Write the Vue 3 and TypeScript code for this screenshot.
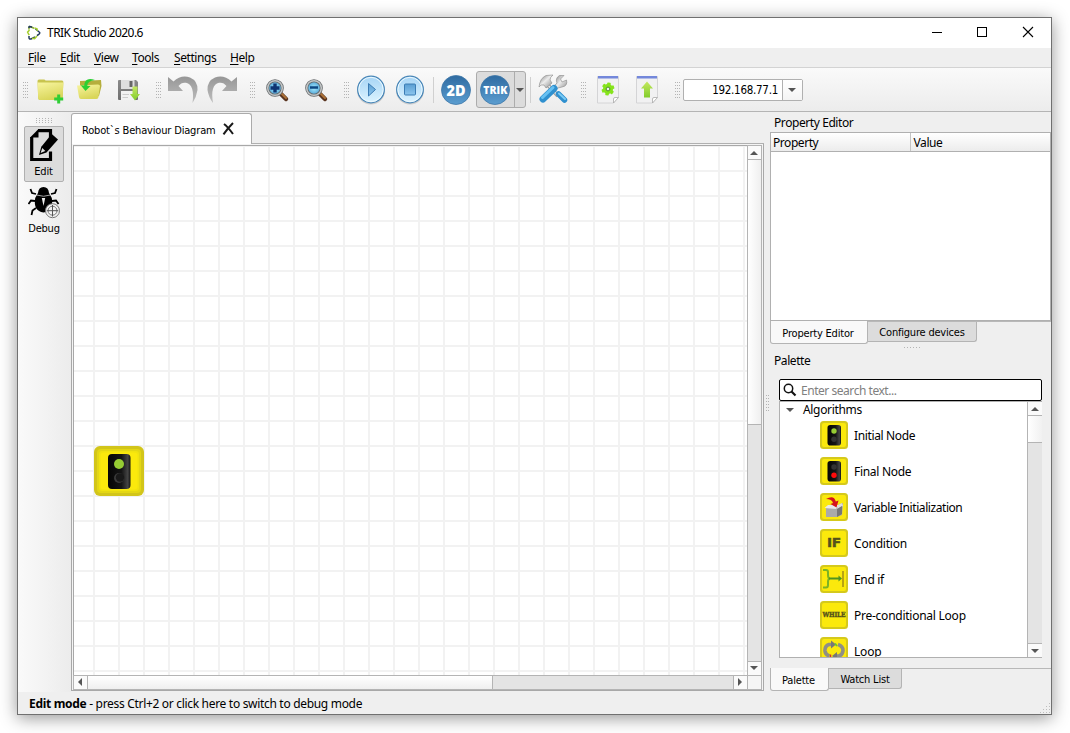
<script setup lang="ts">
const menus: string[] = ['File', 'Edit', 'View', 'Tools', 'Settings', 'Help']

interface PaletteItem {
  name: string
  icon: 'initial' | 'final' | 'variable' | 'if' | 'endif' | 'while' | 'loop'
}

const items: PaletteItem[] = [
  { name: 'Initial Node', icon: 'initial' },
  { name: 'Final Node', icon: 'final' },
  { name: 'Variable Initialization', icon: 'variable' },
  { name: 'Condition', icon: 'if' },
  { name: 'End if', icon: 'endif' },
  { name: 'Pre-conditional Loop', icon: 'while' },
  { name: 'Loop', icon: 'loop' },
]
</script>

<template>
  <div class="desktop">
    <svg class="defs" width="0" height="0">
      <defs>
        <linearGradient id="folder" x1="0" y1="0" x2=".4" y2="1"><stop offset="0" stop-color="#f8f5a0" /><stop offset="1" stop-color="#d9d65a" /></linearGradient>
        <linearGradient id="gray" x1="0" y1="0" x2="0" y2="1"><stop offset="0" stop-color="#979797" /><stop offset="1" stop-color="#bdbdbd" /></linearGradient>
        <linearGradient id="sky" x1="0" y1="0" x2="0" y2="1"><stop offset="0" stop-color="#a6d4f5" /><stop offset="1" stop-color="#dcf4ff" /></linearGradient>
        <linearGradient id="navy" x1="0" y1="0" x2="0" y2="1"><stop offset="0" stop-color="#2f6ba1" /><stop offset="1" stop-color="#5b9dd0" /></linearGradient>
        <linearGradient id="glyph" x1="0" y1="0" x2="0" y2="1"><stop offset="0" stop-color="#5a9ed2" /><stop offset="1" stop-color="#8cc6ee" /></linearGradient>
        <linearGradient id="lime" x1="0" y1="0" x2="0" y2="1"><stop offset="0" stop-color="#c4e860" /><stop offset="1" stop-color="#82cc2b" /></linearGradient>
        <linearGradient id="metal" x1="0" y1="0" x2="1" y2="1"><stop offset="0" stop-color="#777" /><stop offset=".45" stop-color="#ececec" /><stop offset="1" stop-color="#858585" /></linearGradient>
        <linearGradient id="steel" x1="0" y1="0" x2="0" y2="1"><stop offset="0" stop-color="#8a8a8a" /><stop offset="1" stop-color="#6f6f6f" /></linearGradient>
        <linearGradient id="lamp" x1="0" y1="0" x2="1" y2="0"><stop offset="0" stop-color="#050505" /><stop offset=".6" stop-color="#151515" /><stop offset=".88" stop-color="#444" /><stop offset="1" stop-color="#111" /></linearGradient>
        <radialGradient id="lens"><stop offset="0" stop-color="#a8ecff" /><stop offset="1" stop-color="#4a9ed2" /></radialGradient>
      </defs>
    </svg>

    <main class="window">
      <header class="titlebar">
        <svg class="logo" width="16" height="16" viewBox="0 0 16 16" fill="none" stroke-width="1.5">
          <path d="M3 4.5V2.5Q3 1 4.6 1.8L8 3.2" stroke="#7fa82c" />
          <path d="M3 3V2.4Q3 1 4.6 1.7L6 2.3M9.5 4L13.2 7Q14.5 8 13 9.2L11 10.7M9 12L5 14Q3 14.5 3 12.6V11" stroke="#22395c" />
          <path d="M3.5 5L1.6 7.2L3.2 10.2M8.5 3L11 3.8L11.2 6M6 13.3L8.6 13.6L11 11" stroke="#a5cf2e" />
        </svg>
        <span class="title">TRIK Studio 2020.6</span>
        <svg class="winbtns" width="138" height="30" viewBox="0 0 138 30" fill="none" stroke="#000" shape-rendering="crispEdges">
          <path d="M19 14.5H29" /><rect x="64.500" y="9.500" width="9" height="9" />
          <path d="M110 9L120 19M120 9L110 19" shape-rendering="auto" stroke-width="1.1" />
        </svg>
      </header>

      <nav class="menubar">
        <span v-for="m in menus" :key="m" :class="['menu', m.toLowerCase()]"><u>{{ m[0] }}</u>{{ m.slice(1) }}</span>
      </nav>

      <section class="toolbar">
        <i class="grip first" />
        <svg class="tool" viewBox="0 0 39 43">
          <path d="M6.500 13Q6.500 11.500 8 11.500H13Q14 11.500 14.500 12.500H31Q32.500 12.500 32.300 14L31.600 30Q31.500 32 30 32H9Q7.300 32 7.200 30Z" fill="#c8c44e" />
          <path d="M6.500 14.500H32.500L31.500 30.500Q31.500 32 30 32H9Q7.300 32 7.200 30Z" fill="url(#folder)" />
          <path d="M27.700 26.500V35.500M23.200 31H32.200" stroke="#2fce35" stroke-width="3" />
        </svg>
        <svg class="tool" viewBox="0 0 39 43">
          <path d="M10 13L31 12L31.500 18L29 28L10 30Z" fill="#b5ae3c" />
          <path d="M7 17.500L28 16.500Q30 16.500 30 18L28.500 29Q28.300 31 26.500 31L11 31Q9.300 31 9 29Z" fill="url(#folder)" />
          <path d="M25 12Q15 8.500 14.200 17.500L10.700 17.300L15.500 23L20.500 18L17.300 17.800Q17 13 25 12Z" fill="#2bcf32" />
        </svg>
        <svg class="tool" viewBox="0 0 39 43">
          <path d="M9 13Q9 12 10 12H27L29 14V31Q29 32 28 32H10Q9 32 9 31Z" fill="url(#steel)" />
          <rect x="12" y="12" width="13.500" height="9" fill="#dedede" /><rect x="20.500" y="13" width="3" height="6" fill="#666" />
          <rect x="12" y="23" width="14" height="9" fill="#f2f2f2" /><path d="M13.500 26.500H20M13.500 29.500H19" stroke="#ccc" />
          <path d="M23.500 18.500H28.500V26H31L26 32.500L21 26H23.500Z" fill="url(#lime)" />
        </svg>

        <i class="grip" />
        <svg class="tool" viewBox="0 0 39 43"><path d="M4 9L9.500 13.500Q17 6.500 26 9.500Q34 13 33.500 22Q32.500 29 28.500 35Q31 17 22 14.800Q17.500 14 14.500 18L19 23H4Z" fill="url(#gray)" /></svg>
        <svg class="tool" viewBox="0 0 39 43"><path d="M34 9L28.500 13.500Q21 6.500 12 9.500Q4 13 4.500 22Q5.500 29 10 35Q7 17 16 14.800Q20.500 14 23.500 18L19 23H34Z" fill="url(#gray)" /></svg>

        <i class="grip" />
        <svg v-for="z in ['in', 'out']" :key="z" class="tool" viewBox="0 0 39 43">
          <path d="M22 25L28 31" stroke="#5a3520" stroke-width="4.500" stroke-linecap="round" />
          <path d="M24 26L28 30" stroke="#ad7238" stroke-width="2" stroke-linecap="round" />
          <circle cx="17" cy="20" r="7.300" fill="url(#lens)" stroke="#66696b" stroke-width="3" />
          <circle cx="17" cy="20" r="7.300" fill="none" stroke="#c2c6c7" stroke-width="1.500" />
          <path v-if="z === 'in'" d="M17 15.500V24.500M12.500 20H21.500" stroke="#0d3573" stroke-width="3.400" />
          <path v-else d="M13 19.500H21" stroke="#0d4783" stroke-width="2.500" />
        </svg>

        <i class="grip" />
        <svg class="tool" viewBox="0 0 39 43">
          <circle cx="19" cy="22.500" r="14" fill="#ccc" /><circle cx="19" cy="21.500" r="13.300" fill="url(#sky)" stroke="#4a87b8" stroke-width="1.300" />
          <circle cx="19" cy="21.500" r="12.200" fill="none" stroke="#eefaff" /><path d="M16.500 15.500L23.500 21.500L16.500 28Z" fill="url(#glyph)" stroke="#3b7cb4" />
        </svg>
        <svg class="tool" viewBox="0 0 39 43">
          <circle cx="19" cy="22.500" r="14" fill="#ccc" /><circle cx="19" cy="21.500" r="13.300" fill="url(#sky)" stroke="#4a87b8" stroke-width="1.300" />
          <circle cx="19" cy="21.500" r="12.200" fill="none" stroke="#eefaff" /><rect x="13.500" y="16" width="11" height="11" rx="1" fill="url(#glyph)" stroke="#3b7cb4" />
        </svg>

        <i class="sep" />
        <svg class="tool" viewBox="0 0 39 43">
          <circle cx="19" cy="22" r="14.500" fill="url(#navy)" stroke="#3d77a8" stroke-width=".8" />
          <text x="19" y="27.500" class="badge two" textLength="19" lengthAdjust="spacingAndGlyphs">2D</text>
        </svg>
        <span class="split">
          <svg width="37" height="36" viewBox="0 0 37 36">
            <circle cx="18" cy="18" r="14.500" fill="url(#navy)" stroke="#3d77a8" stroke-width=".8" />
            <text x="18.300" y="22" class="badge trik" textLength="24" lengthAdjust="spacingAndGlyphs">TRIK</text>
          </svg>
          <b><i class="down" /></b>
        </span>
        <i class="sep after" />
        <svg class="tool" viewBox="0 0 39 43">
          <path d="M12 15L24 28" stroke="#999" stroke-width="4" /><path d="M12 15L24 28" stroke="#e8e8e8" stroke-width="1.800" />
          <path d="M5 19Q6 10 12 7.500L19 7Q16 9 16 12L18 15L12 20L10 17L7 17Z" fill="url(#metal)" stroke="#888" stroke-width=".6" />
          <path d="M20 18L23 15Q21 10 25.500 7.500L30 7.500L26.500 11L28 14L32.500 12Q34 18 28 19L24 20L20 23Z" fill="url(#metal)" stroke="#888" stroke-width=".6" />
          <path d="M9 31L20 20.500" stroke="#2f90cf" stroke-width="7" stroke-linecap="round" /><path d="M8.500 29.500L19 19.500" stroke="#66c0f2" stroke-width="3" stroke-linecap="round" />
          <path d="M24.500 26L30.500 32" stroke="#2f90cf" stroke-width="5.500" stroke-linecap="round" /><path d="M25 25.500L31 31" stroke="#7acbf5" stroke-width="2" stroke-linecap="round" />
        </svg>

        <i class="grip" />
        <svg v-for="d in ['gear', 'upload']" :key="d" class="tool" viewBox="0 0 39 43">
          <path d="M8.500 8.500H29.500V29L24.500 35H8.500Z" fill="#f1f1f2" stroke="#d4d4d6" />
          <rect x="9" y="8" width="20" height="2.500" fill="#7488db" />
          <path d="M29.500 29.500L24.500 35V31Q24.500 29.500 26 29.500Z" fill="#fff" stroke="#aaa" stroke-width=".8" />
          <g v-if="d === 'gear'" fill="#86e31c">
            <rect v-for="a in [0, 60, 120]" :key="a" x="17.200" y="14.600" width="3.600" height="12.800" rx=".8" :transform="`rotate(${a + 10} 19 21)`" />
            <circle cx="19" cy="21" r="5" /><circle cx="19" cy="21" r="1.900" fill="#eee" stroke="#4f8f28" stroke-width="1" />
          </g>
          <path v-else d="M19 13.500L25 20.500H22V29.500H16V20.500H13Z" fill="url(#lime)" />
        </svg>

        <i class="grip" />
        <span class="combo"><span>192.168.77.1</span><b><i class="down" /></b></span>
      </section>

      <section class="body">
        <aside class="modes">
          <i class="grip wide" />
          <button class="mode active">
            <svg width="32" height="34" viewBox="0 0 32 34">
              <path d="M10 1.700H22.500V9.500M22.500 22.500V30.500H3.700V8" fill="none" stroke="#000" stroke-width="3.200" />
              <path d="M2.100 8.500L10.500 .1V8.500Z" /><path d="M23.700 5L30 10.500L18.500 23.500L11 26L13.300 17.700Z" />
              <path d="M14.300 19L17.300 22L12.600 24Z" fill="#ddd" />
            </svg>
            <span>Edit</span>
          </button>
          <button class="mode second">
            <svg width="32" height="34" viewBox="0 -1 32 34">
              <path d="M8 7L4 6L2.500 2M7 14L3 13.500L.5 17M8 21L4.500 23.500L3.500 28M23 7L27 6L28.500 2M24 14L28 13.500L30.500 17" fill="none" stroke="#000" stroke-width="1.800" />
              <path d="M10 6Q10.500 0 15.500 0Q20.500 0 21 6L23.800 11Q26 24 15.500 25.500Q5 24 7.200 11Z" />
              <path d="M8.500 8Q15.500 10.500 22.500 8" stroke="#ccc" stroke-width=".8" fill="none" /><path d="M13.800 11H17.200L15.500 19Z" fill="#eee" />
              <circle cx="24.500" cy="23.700" r="7" fill="#f4f4f4" stroke="#777" /><circle cx="24.500" cy="23.700" r="4.500" fill="none" stroke="#777" />
              <path d="M24.500 18V29.500M18.700 23.700H30.300" stroke="#555" />
            </svg>
            <span class="dbg">Debug</span>
          </button>
        </aside>

        <section class="editor">
          <div class="tabs">
            <div class="doctab">
              <span>Robot`s Behaviour Diagram</span>
              <svg width="14" height="14" viewBox="0 0 14 14"><path d="M2 2Q5.500 4.500 11 12M11 1Q6 6 1.500 12.300" stroke="#1a1a1a" stroke-width="2" fill="none" /></svg>
            </div>
            <div class="tabline" />
          </div>
          <div class="pane">
            <div class="canvas">
              <svg class="node" width="50" height="50" viewBox="0 0 50 50">
                <rect width="50" height="50" rx="6" fill="#d2c51a" /><rect x="3" y="3" width="44" height="44" rx="4" fill="#e4d714" /><rect x="5" y="5" width="40" height="40" rx="3" fill="#f1e30f" /><rect x="6.500" y="6.500" width="37" height="37" rx="3" fill="#fbe90c" />
                <rect x="14" y="8" width="22.500" height="35" rx="4" fill="url(#lamp)" />
                <circle cx="25" cy="18" r="5" fill="#96cc33" /><circle cx="25" cy="32" r="5" fill="#3a3a3a" /><circle cx="26" cy="31.500" r="4.200" fill="#191919" />
              </svg>
            </div>
            <div class="vbar"><b><i class="up" /></b><em /><s /><b><i class="down" /></b></div>
            <div class="hbar"><b><i class="left" /></b><em /><s /><b><i class="right" /></b></div>
            <div class="corner" />
          </div>
        </section>

        <div class="gutter"><i class="grip" /></div>

        <aside class="docks">
          <div class="dock-title">Property Editor</div>
          <div class="table">
            <div class="thead"><span>Property</span><span class="val">Value</span></div>
          </div>
          <div class="btabs">
            <span class="sel pe">Property Editor</span><span class="other cd">Configure devices</span>
          </div>
          <i class="grip hgrip" />
          <div class="dock-title pal">Palette</div>
          <div class="palette">
            <div class="search">
              <svg width="14" height="14" viewBox="0 0 14 14" fill="none" stroke="#111"><circle cx="5.500" cy="5.500" r="4.200" stroke-width="1.500" /><path d="M8.500 8.500L12.500 12.500" stroke-width="2.200" /></svg>
              <span>Enter search text...</span>
            </div>
            <div class="treebox">
              <div class="tree">
                <div class="group"><i class="down" /><span>Algorithms</span></div>
                <div v-for="it in items" :key="it.name" class="row">
                  <svg width="28" height="28" viewBox="0 0 28 28">
                    <rect width="28" height="28" rx="3.500" fill="#d5c91c" /><rect x="2" y="2" width="24" height="24" rx="2" fill="#fbe90c" />
                    <g v-if="it.icon === 'initial' || it.icon === 'final'">
                      <rect x="7.500" y="4" width="13.500" height="20.500" rx="2.800" fill="url(#lamp)" />
                      <circle cx="14" cy="10" r="2.700" :fill="it.icon === 'initial' ? '#96cc33' : '#333'" />
                      <circle cx="14" cy="18.300" r="2.700" :fill="it.icon === 'final' ? '#ff0b0b' : '#333'" />
                    </g>
                    <g v-else-if="it.icon === 'variable'">
                      <path d="M6 14L18 12L23 10V12L22 22L17 24H6Z" fill="#aaa" /><path d="M4.500 15L8 12H19L16 16Z" fill="#e9e9e9" /><path d="M18 12L22 10L23 13L17 16Z" fill="#ddd" /><path d="M17 16L22 13V21L17 24Z" fill="#777" />
                      <path d="M6 6Q14 1.500 15.800 8.500L18.500 7.500L16.500 14.500L10.500 11L13 10Q12 6 6 6Z" fill="#d5131c" />
                    </g>
                    <text v-else-if="it.icon === 'if'" x="14" y="18.300" class="word" font-size="12" textLength="14" lengthAdjust="spacingAndGlyphs">IF</text>
                    <g v-else-if="it.icon === 'endif'" fill="none" stroke="#7cb324" stroke-width="2">
                      <path d="M3 5H6Q8 5 8 7V10Q8 13.500 10 13.500Q8 13.500 8 17V20Q8 22.500 6 22.500H3" /><path d="M9 13.500H20" stroke="#4f9420" /><path d="M18.500 10.500L22 13.500L18.500 16.500Z" fill="#4f9420" stroke="none" /><path d="M23 6V22" stroke="#a28d16" stroke-width="1.500" />
                    </g>
                    <text v-else-if="it.icon === 'while'" x="14" y="16" class="word while" font-size="7" textLength="23" lengthAdjust="spacingAndGlyphs">WHILE</text>
                    <g v-else fill="none" stroke="#8f8f86" stroke-width="3.600">
                      <path d="M12 7.500H9Q4.500 9 5 14Q5.500 18 9.500 19" /><path d="M18 7.500Q23 9 23 13.500Q22.500 18 19 19H15" /><path d="M11 3.500L16 7.500L11 11.500ZM17 15L12 19L17 23Z" fill="#777" stroke="none" /><path d="M15 6.500L17 9" stroke="#6cc42c" stroke-width="2" /><path d="M10.500 17.500V21" stroke="#c33" stroke-width="1.500" />
                    </g>
                  </svg>
                  <span :class="'t-' + it.icon">{{ it.name }}</span>
                </div>
              </div>
              <div class="tbar"><b><i class="up" /></b><em /><s /><b><i class="down" /></b></div>
            </div>
          </div>
          <div class="btabs bottom">
            <span class="sel pl">Palette</span><span class="other wl">Watch List</span>
          </div>
        </aside>
      </section>

      <footer class="status">
        <span><strong>Edit mode</strong> - press Ctrl+2 or click here to switch to debug mode</span>
        <svg width="12" height="12" viewBox="0 0 12 12" fill="#bdbdbd"><path d="M10 1h1v1h-1zM7 4h1v1h-1zM10 4h1v1h-1zM4 7h1v1h-1zM7 7h1v1h-1zM10 7h1v1h-1zM1 10h1v1h-1zM4 10h1v1h-1zM7 10h1v1h-1zM10 10h1v1h-1z" /></svg>
      </footer>
    </main>
  </div>
</template>

<style>
html, body { margin: 0; background: #fff; overflow: hidden; }
</style>

<style scoped>
* { box-sizing: border-box; }
.desktop { width: 1070px; height: 733px; padding: 17px; overflow: hidden; font: 12px/16px "Noto Sans", "Open Sans", sans-serif; color: #000; background: #fff; white-space: nowrap; }
.defs { position: absolute; }
.window { width: 1035px; height: 698px; border: 1px solid #707070; background: #efefef; display: flex; flex-direction: column; box-shadow: 0 3px 16px rgba(0, 0, 0, .42); }
.titlebar { height: 30px; flex: none; background: #fff; display: flex; align-items: center; }
.logo { margin-left: 8px; }
.title { margin-left: 5px; letter-spacing: -.53px; }
.winbtns { margin-left: auto; }
.menubar { height: 20px; flex: none; border-bottom: 1px solid #d3d3d3; padding: 2px 0 0 10px; display: flex; letter-spacing: -.42px; }
.menu { flex: none; }
.menu u { text-underline-offset: 2px; }
.file { width: 32px; } .edit { width: 34px; } .view { width: 38px; } .tools { width: 42px; } .settings { width: 56px; }
.toolbar { height: 44px; flex: none; border-bottom: 1px solid #b4b4b4; background: linear-gradient(#fafafa, #ececec); display: flex; align-items: center; }
.tool { width: 39px; height: 43px; flex: none; }
.grip { display: block; flex: none; width: 5px; height: 16px; margin: 0 3px 0 8px; background: radial-gradient(circle at .5px .5px, #b4b4b4 .6px, transparent .8px) 0 0 / 2px 3px; }
.grip.first { margin: 0 3px 0 5px; }
.sep { width: 1px; height: 26px; background: #d0d0d0; margin: 0 3px; }
.sep.after { margin: 0 3px 0 4px; }
.split { display: flex; flex: none; width: 50px; height: 37px; border: 1px solid #acacac; border-radius: 3px; background: #dcdcdc; }
.split b { flex: 1; border-left: 1px solid #acacac; display: grid; place-items: center; }
.badge { fill: #fff; text-anchor: middle; font-family: "Open Sans", "Noto Sans", sans-serif; font-weight: 800; }
.badge.two { font-size: 15px; }
.badge.trik { font-size: 10.5px; }
.down, .up, .left, .right { width: 0; height: 0; flex: none; border: 4px solid transparent; }
.down { border-top-color: #555; border-bottom: 0; }
.up { border-bottom-color: #555; border-top: 0; }
.left { border-right-color: #555; border-left: 0; }
.right { border-left-color: #555; border-right: 0; }
.combo { width: 120px; height: 22px; border: 1px solid #b0b0b0; border-radius: 2px; background: #fff; display: flex; font: 11.5px/21px "DejaVu Sans Condensed", "DejaVu Sans", sans-serif; letter-spacing: -.27px; }
.combo > span { width: 98px; text-align: right; padding-right: 4px; }
.combo b { flex: 1; border-left: 1px solid #b0b0b0; display: grid; place-items: center; padding-right: 2px; background: linear-gradient(#fff, #f4f4f4); }
.body { height: 580px; flex: none; display: flex; }
.modes { width: 53px; flex: none; background: linear-gradient(90deg, #fafafa, #ececec); display: flex; flex-direction: column; align-items: center; }
.grip.wide { width: 17px; height: 5px; margin: 6px 0 3px -1px; background-size: 3px 2px; }
.mode { width: 40px; height: 56px; margin-right: 1px; padding: 2px 0 0; border: 1px solid transparent; border-radius: 2px; background: none; font: 11px/16px "DejaVu Sans Condensed", "DejaVu Sans", sans-serif; color: #000; letter-spacing: -.2px; display: flex; flex-direction: column; align-items: center; }
.mode.active { background: #dcdcdc; border-color: #b0b0b0; }
.mode svg { flex: none; }
.mode span { margin-top: 1px; margin-right: 1px; }
.mode.second { margin-top: 1px; }
.mode.second .dbg { margin-top: 1px; margin-right: 0; }
.editor { width: 693px; flex: none; display: flex; flex-direction: column; }
.tabs { height: 32px; flex: none; display: flex; padding-top: 1px; }
.doctab { width: 181px; border: 1px solid #ababab; border-bottom: 0; border-radius: 3px 3px 0 0; background: #fff; display: flex; align-items: center; padding-left: 10px; font: 11px/16px "DejaVu Sans Condensed", "DejaVu Sans", sans-serif; letter-spacing: -.17px; }
.doctab span { width: 140px; padding-top: 3px; }
.tabline { flex: 1; border-bottom: 1px solid #b0b0b0; }
.pane { height: 547px; border: 1px solid #a8a8a8; border-top: 0; display: grid; grid-template: 530px 15px / 674px 15px; padding: 1px 1px 0 1px; background: #f4f4f4; }
.canvas { border: 1px solid #a8a8a8; border-width: 1px 0 0 1px; position: relative; background-color: #fff; background-image: linear-gradient(90deg, #f2f2f2 2px, transparent 2px), linear-gradient(#f2f2f2 2px, transparent 2px); background-size: 25px 25px; background-position: 19px 0, 0 -1px; }
.node { position: absolute; left: 20px; top: 300px; }
.vbar, .tbar { border: 1px solid #b4b4b4; border-width: 1px 1px 0 1px; display: flex; flex-direction: column; background: #e4e4e4; }
.vbar b, .tbar b { height: 14px; flex: none; display: grid; place-items: center; padding-right: 1px; background: #fafafa; border-bottom: 1px solid #b4b4b4; }
.vbar b:last-child, .tbar b:last-child { border-bottom: 0; border-top: 1px solid #b4b4b4; }
.vbar b:last-child { padding-bottom: 1px; }
.vbar em { height: 265px; background: linear-gradient(90deg, #fff, #efefef); border-bottom: 1px solid #b4b4b4; }
.vbar s, .hbar s, .tbar s { flex: 1; }
.hbar { border: 1px solid #b4b4b4; border-right: 0; display: flex; background: #e4e4e4; }
.hbar b { width: 14px; flex: none; display: grid; place-items: center; padding: 0 1px 1px 0; background: #fafafa; border-right: 1px solid #b4b4b4; }
.hbar b:last-child { border-right: 0; border-left: 1px solid #b4b4b4; padding-right: 2px; }
.hbar em { width: 405px; background: linear-gradient(#fff, #efefef); border-right: 1px solid #b4b4b4; }
.corner { border: 1px solid #b4b4b4; background: #f5f5f5; }
.gutter { width: 6px; flex: none; padding-top: 283px; }
.gutter .grip { margin: 0 0 0 2px; width: 3px; }
.docks { width: 281px; flex: none; display: flex; flex-direction: column; }
.dock-title { height: 20px; flex: none; padding: 3px 0 0 4px; letter-spacing: -.42px; }
.table { height: 189px; flex: none; border: 1px solid #b0b0b0; background: #fff; }
.thead { height: 19px; border-bottom: 1px solid #b0b0b0; background: linear-gradient(#fff, #ececec); display: flex; letter-spacing: -.45px; line-height: 20px; }
.thead span { width: 140px; padding-left: 2px; border-right: 1px solid #c4c4c4; }
.thead .val { border: 0; letter-spacing: -.4px; padding-left: 3px; }
.btabs { display: flex; align-items: flex-start; height: 24px; flex: none; border-top: 1px solid #b8b8b8; font-family: "DejaVu Sans Condensed", "DejaVu Sans", sans-serif; font-size: 11px; letter-spacing: -.2px; }
.btabs span { border: 1px solid #b4b4b4; border-top: 0; text-align: center; }
.btabs .sel { height: 23px; line-height: 25px; background: #f9f9f9; border-radius: 0 0 3px 3px; margin-top: -1px; padding-right: 2px; }
.btabs .other { height: 20px; line-height: 21px; background: #dcdcdc; border-left: 0; border-radius: 0 0 3px 0; }
.pe { width: 98px; } .cd { width: 109px; } .pl { width: 59px; } .wl { width: 73px; }
.hgrip { width: 17px; height: 3px; margin: 2px 0 0 134px; background-size: 3px 3px; }
.pal { height: 29px; padding-top: 3px; }
.palette { margin: 0 9px; }
.search { height: 22px; border: 1px solid #000; border-radius: 2px; background: #fff; display: flex; align-items: center; color: #808080; letter-spacing: -.46px; padding-left: 3px; }
.search span { margin-left: 4px; padding-top: 1px; }
.treebox { height: 257px; border: 1px solid #b0b0b0; display: flex; background: #fff; }
.tree { width: 247px; overflow: hidden; }
.group { height: 15px; margin-bottom: 1px; display: flex; align-items: center; padding-left: 6px; }
.group span { margin-left: 9px; letter-spacing: -.33px; }
.row { height: 36px; display: flex; align-items: center; padding-left: 40px; letter-spacing: -.2px; }
.row svg { flex: none; margin-bottom: 2px; }
.row span { margin-left: 6px; }
.row .t-initial { letter-spacing: -.36px; }
.row .t-final { letter-spacing: -.3px; }
.row .t-variable { letter-spacing: -.43px; }
.row .t-endif { letter-spacing: -.35px; }
.row .t-while { letter-spacing: -.25px; }
.tbar { width: 15px; flex: none; border-right: 0; border-top: 0; margin-right: -1px; }
.tbar em { height: 27px; background: linear-gradient(90deg, #fff, #f1f1f1); border-bottom: 1px solid #b4b4b4; }
.word { text-anchor: middle; font-family: "DejaVu Sans", sans-serif; font-weight: 700; fill: #55511b; stroke: #55511b; stroke-width: .4px; }
.word.while { font-family: "DejaVu Serif", serif; }
.bottom { margin-top: 10px; }
.status { height: 22px; display: flex; align-items: center; justify-content: space-between; padding-left: 11px; letter-spacing: -.31px; }
.status span { margin-top: 1px; }
.status svg { align-self: flex-end; }
</style>
